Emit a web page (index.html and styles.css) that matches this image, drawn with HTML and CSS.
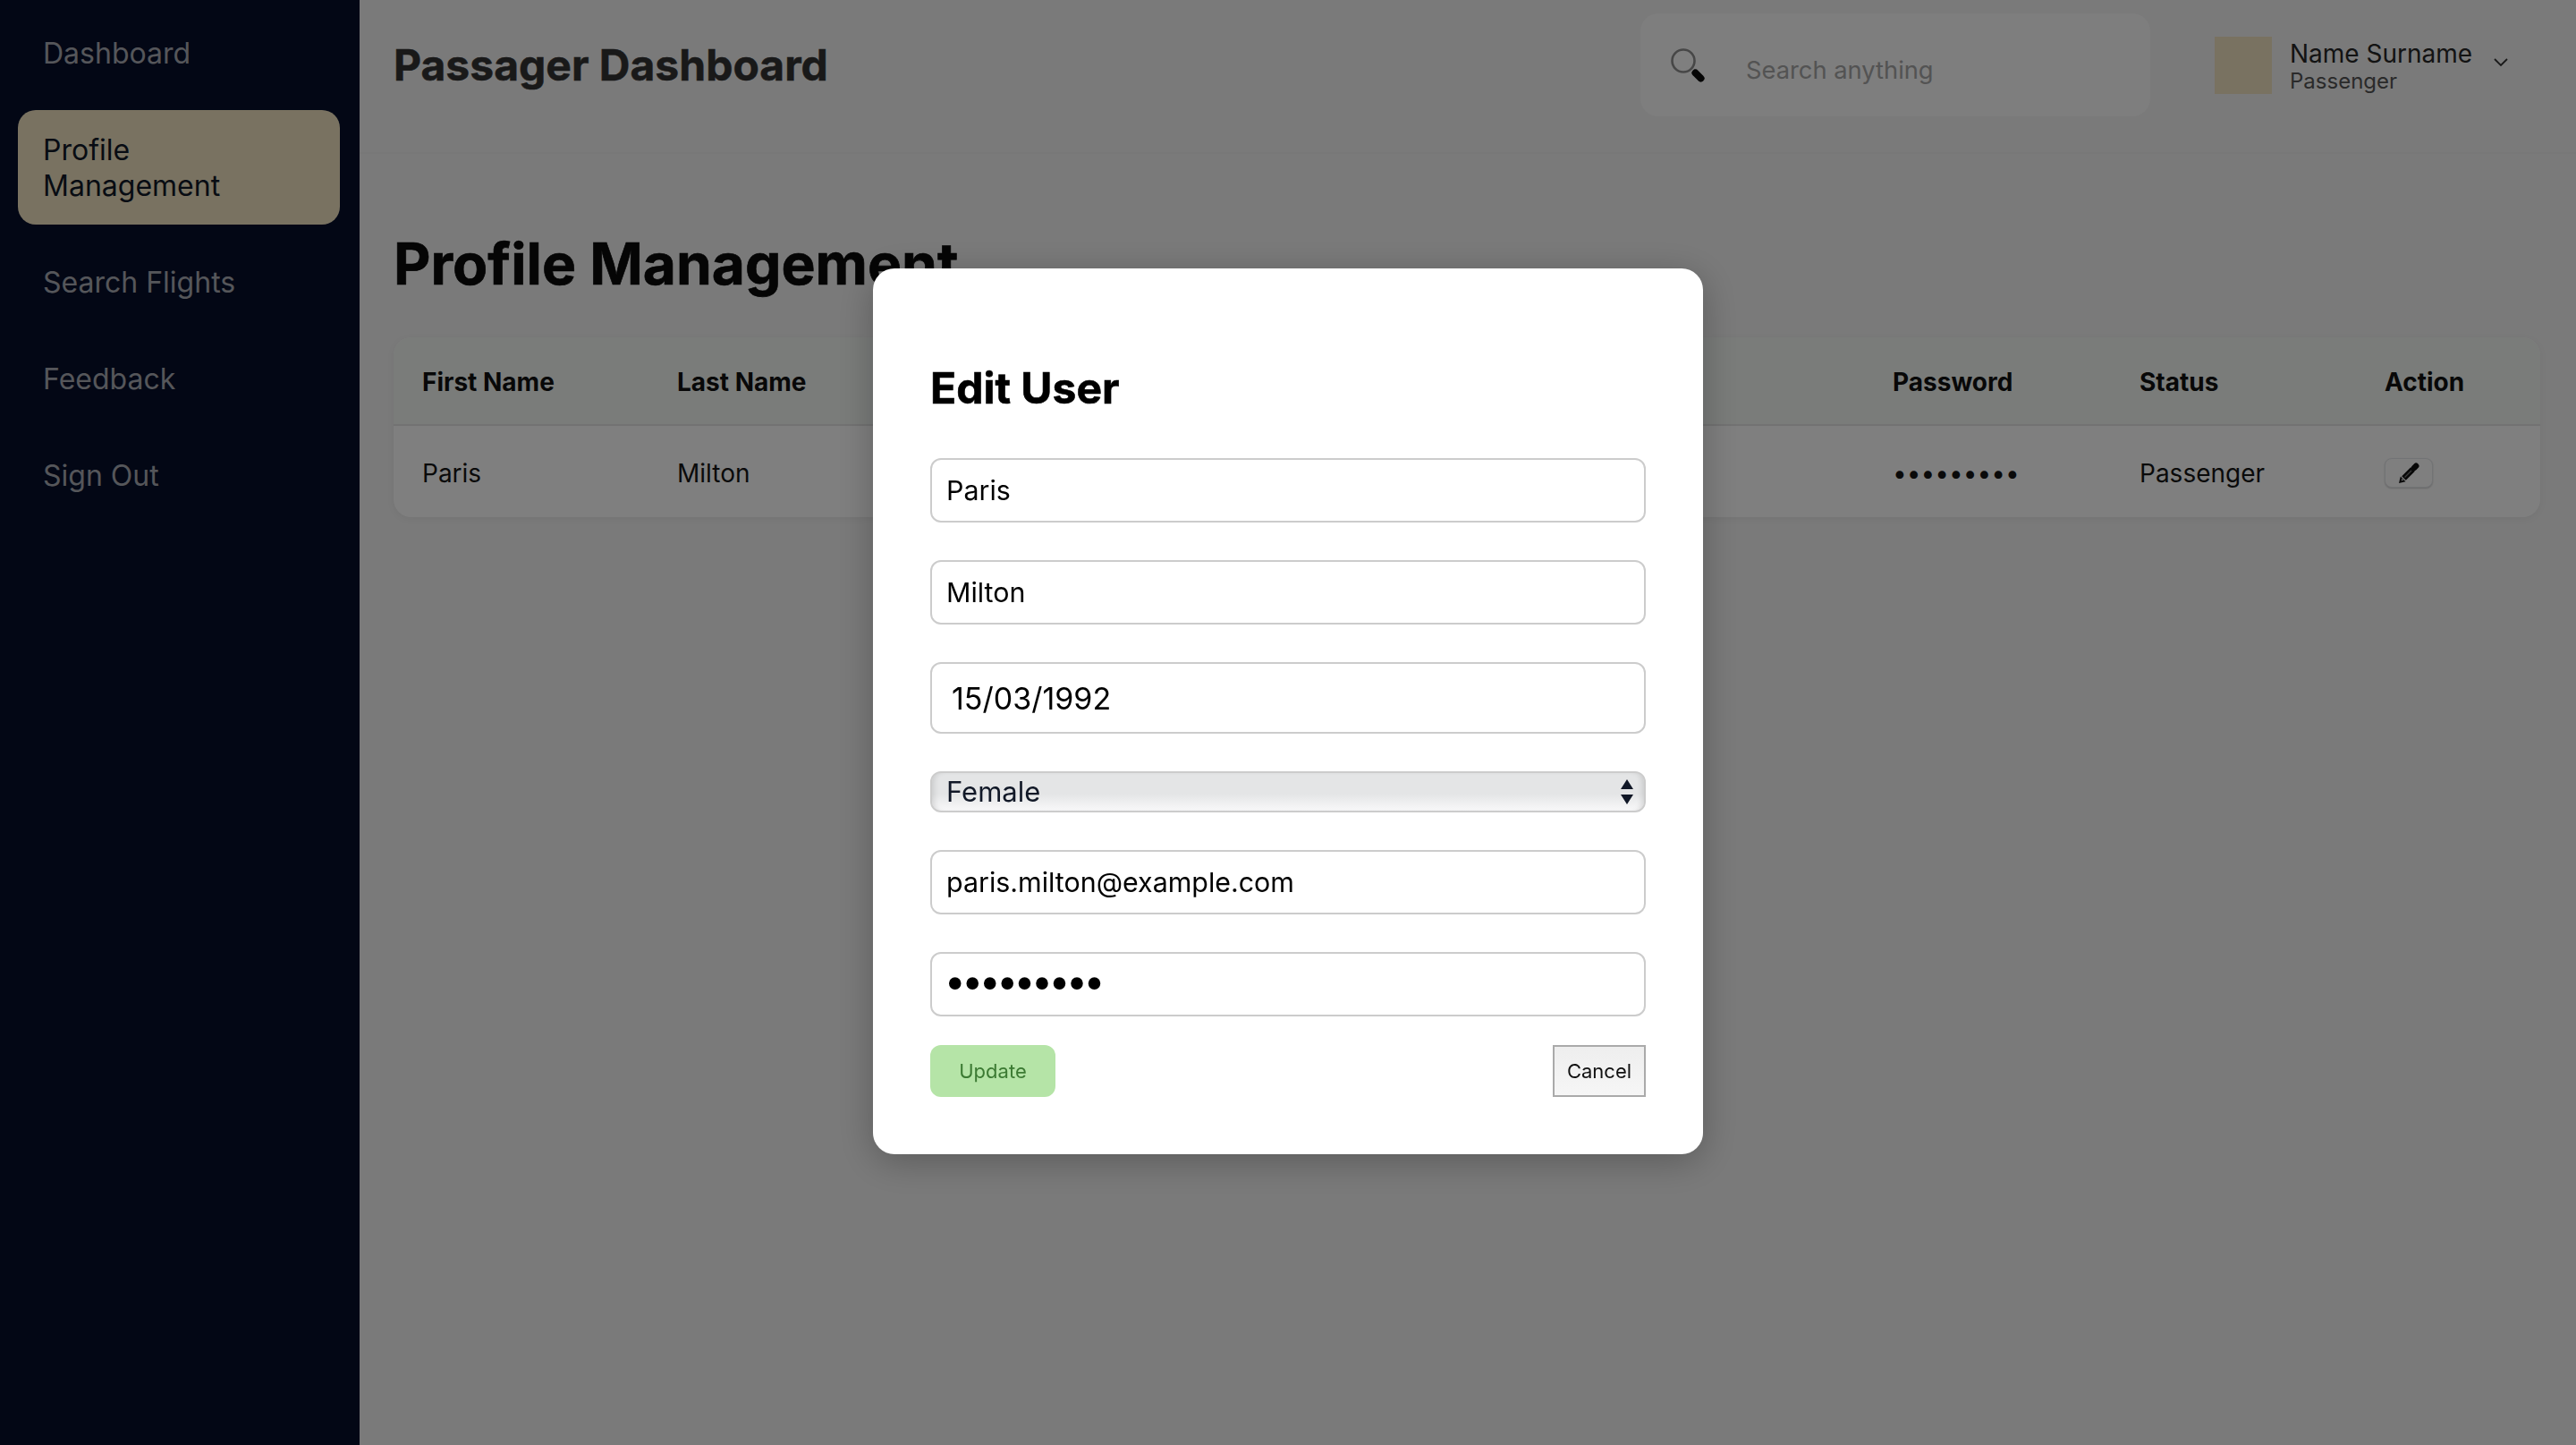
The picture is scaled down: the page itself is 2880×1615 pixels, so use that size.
FILE: index.html
```html
<!DOCTYPE html>
<html lang="en">
<head>
    <meta charset="UTF-8">
    <meta name="viewport" content="width=device-width, initial-scale=1.0">
    <title>Passager Dashboard</title>
    <link rel="stylesheet" href="styles.css">
</head>
<body>
    <div class="layout">
        <nav class="sidebar">
            <a class="nav-link">Dashboard</a>
            <a class="nav-link active">Profile Management</a>
            <a class="nav-link">Search Flights</a>
            <a class="nav-link">Feedback</a>
            <a class="nav-link">Sign Out</a>
        </nav>
        <div class="main">
            <header class="topbar">
                <h1 class="page-title">Passager Dashboard</h1>
                <div class="search-box">
                    <svg class="search-icon" viewBox="0 0 40 40" width="40" height="40">
                        <circle cx="16" cy="15" r="12.5" fill="#fff" stroke="#8e8e8e" stroke-width="2.6"/>
                        <path d="M27 26l2 2" stroke="#333" stroke-width="4"/>
                        <path d="M29.5 28.5l6 6" stroke="#0c0c0c" stroke-width="8" stroke-linecap="round"/>
                    </svg>
                    <span class="search-text">Search anything</span>
                </div>
                <div class="user">
                    <div class="avatar"></div>
                    <div class="user-info">
                        <div class="user-name">Name Surname</div>
                        <div class="user-role">Passenger</div>
                    </div>
                    <svg class="chevron" viewBox="0 0 16 10" width="16" height="10">
                        <path d="M1 1l7 7 7-7" fill="none" stroke="#333" stroke-width="1.8"/>
                    </svg>
                </div>
            </header>
            <section class="content">
                <h2 class="section-title">Profile Management</h2>
                <table class="user-table">
                    <thead>
                        <tr>
                            <th class="col-first">First Name</th>
                            <th class="col-last">Last Name</th>
                            <th class="col-dob">Date of Birth</th>
                            <th class="col-email">Email</th>
                            <th class="col-pass">Password</th>
                            <th class="col-status">Status</th>
                            <th>Action</th>
                        </tr>
                    </thead>
                    <tbody>
                        <tr>
                            <td>Paris</td>
                            <td>Milton</td>
                            <td>15/03/1992</td>
                            <td>paris.milton@example.com</td>
                            <td>•••••••••</td>
                            <td>Passenger</td>
                            <td>
                                <button class="edit-btn" type="button">
                                    <svg viewBox="0 0 24 24" width="24" height="24">
                                        <path d="M18 6l2.2-2.2" stroke="#111" stroke-width="6.5" stroke-linecap="round"/>
                                        <path d="M6.5 17.5L16.5 7.5" stroke="#111" stroke-width="6.5"/>
                                        <path d="M7.5 16.5l7.5-7.5" stroke="#777" stroke-width="1.2"/>
                                        <path d="M1 23l1.8-7.5 5.7 5.7z" fill="#111"/>
                                        <path d="M3.6 20.4l.7-2.8 2.1 2.1z" fill="#bbb"/>
                                    </svg>
                                </button>
                            </td>
                        </tr>
                    </tbody>
                </table>
            </section>
        </div>
    </div>

    <div class="overlay">
        <form class="modal">
            <h2 class="modal-title">Edit User</h2>
            <input class="field" type="text" value="Paris">
            <input class="field" type="text" value="Milton">
            <input class="field field-date" type="text" value="15/03/1992">
            <div class="select-wrap">
                <select class="field-select">
                    <option>Female</option>
                    <option>Male</option>
                </select>
                <svg class="select-arrows" viewBox="0 0 14 28" width="14" height="28">
                    <path d="M7 0l7 11H0z M0 17h14L7 28z" fill="#111827"/>
                </svg>
            </div>
            <input class="field" type="text" value="paris.milton@example.com">
            <input class="field field-pass" type="password" value="paris1992">
            <div class="modal-actions">
                <button class="btn-update" type="button">Update</button>
                <button class="btn-cancel" type="button">Cancel</button>
            </div>
        </form>
    </div>
</body>
</html>
```
FILE: styles.css
```css
* {
    box-sizing: border-box;
}
html, body {
    height: 100%;
}
body {
    margin: 0;
    font-family: Inter, "Liberation Sans", sans-serif;
    background-color: #f4f4f4;
    color: #111;
}
.layout {
    display: flex;
    height: 100%;
}

/* sidebar */
.sidebar {
    width: 402px;
    flex-shrink: 0;
    background-color: #060f2b;
    padding: 15px 22px 15px 20px;
    display: flex;
    flex-direction: column;
    gap: 20px;
}
.nav-link {
    display: block;
    padding: 25px 36px 23px 28px;
    font-size: 32px;
    line-height: 40px;
    color: #aaacb4;
}
.nav-link.active {
    background-color: #f3e5c3;
    border-radius: 20px;
    color: #111827;
}

/* top bar */
.main {
    flex: 1;
    min-width: 0;
}
.topbar {
    height: 172px;
    display: flex;
    align-items: flex-start;
    padding: 15px 40px 0 38px;
    border-bottom: 2px solid #f1f1f1;
}
.page-title {
    margin: 30px 0 0;
    font-size: 48px;
    line-height: 56px;
    font-weight: 700;
    color: #333;
    flex: 1;
    -webkit-text-stroke: 0.5px #333;
}
.search-box {
    width: 570px;
    height: 115px;
    display: flex;
    align-items: center;
    padding: 0 32px;
    background-color: #fcfcfc;
    border-radius: 20px;
}
.search-text {
    margin-left: 46px;
    margin-top: 12px;
    font-size: 27.3px;
    color: #a6a6a6;
}
.user {
    margin-left: 72px;
    margin-top: 26px;
    width: 364px;
    display: flex;
    align-items: flex-start;
}
.avatar {
    width: 64px;
    height: 64px;
    background-color: #f3e5c3;
}
.user-info {
    margin-left: 20px;
    padding-top: 2px;
}
.user-name {
    font-size: 28px;
    line-height: 34px;
    color: #262626;
}
.user-role {
    font-size: 24px;
    line-height: 28px;
    color: #555;
}
.chevron {
    margin: 24px 0 0 24px;
}

/* table */
.content {
    padding: 0 40px 0 38px;
}
.section-title {
    margin: 87px 0 0;
    height: 118px;
    font-size: 64px;
    line-height: 72px;
    font-weight: 700;
    color: #0a0a0a;
    -webkit-text-stroke: 0.7px #0a0a0a;
}
.user-table {
    width: 100%;
    border-collapse: separate;
    border-spacing: 0;
    border-radius: 20px;
    background-color: #fff;
    box-shadow: 0 2px 8px rgba(0,0,0,0.05);
    table-layout: fixed;
    overflow: hidden;
}
.user-table th {
    height: 99px;
    padding: 3px 0 0 32px;
    text-align: left;
    font-size: 28px;
    font-weight: 700;
    background-color: #f4f8f5;
    border-bottom: 2px solid #e4e4e4;
}
.user-table td {
    height: 102px;
    padding: 3px 0 0 32px;
    font-size: 28px;
    color: #151515;
}
.col-first { width: 285px; }
.col-last { width: 500px; }
.col-dob { width: 260px; }
.col-email { width: 599px; }
.col-pass { width: 276px; }
.col-status { width: 274px; }
.edit-btn {
    display: flex;
    align-items: center;
    justify-content: center;
    width: 54px;
    height: 33px;
    padding: 0;
    background-color: #fff;
    border: 1px solid #e5e7eb;
    border-radius: 8px;
    box-shadow: 0 1px 2px rgba(0,0,0,0.2);
}

/* modal */
.overlay {
    position: fixed;
    top: 0;
    left: 0;
    right: 0;
    bottom: 0;
    background-color: rgba(0,0,0,0.5);
    display: flex;
    justify-content: center;
    align-items: flex-start;
    padding-top: 300px;
}
.modal {
    width: 928px;
    height: 990px;
    padding: 64px;
    background-color: #fff;
    border-radius: 24px;
    box-shadow: 0 8px 40px rgba(0,0,0,0.25);
    display: flex;
    flex-direction: column;
}
.modal-title {
    margin: 38px 0 46px;
    font-size: 48px;
    line-height: 64px;
    font-weight: 700;
    color: #000;
    -webkit-text-stroke: 0.6px #000;
}
.field {
    display: block;
    width: 100%;
    height: 72px;
    margin-bottom: 42px;
    padding: 0 16px;
    border: 2px solid #ccc;
    border-radius: 12px;
    background-color: #fff;
    font-family: inherit;
    font-size: 30.4px;
    color: #000;
}
.field-date {
    height: 80px;
    padding: 0 22px;
    font-size: 34px;
}
.field-pass {
    margin-bottom: 32px;
    font-family: "DejaVu Sans", sans-serif;
    font-size: 33px;
    -webkit-text-stroke: 4px #000;
}
.select-wrap {
    position: relative;
    margin-bottom: 42px;
}
.field-select {
    display: block;
    width: 100%;
    height: 46px;
    padding: 0 16px;
    appearance: none;
    border: 2px solid #ccc;
    border-radius: 12px;
    background: linear-gradient(#e4e5e6 0, #e4e5e6 55%, #f8f8f9 100%);
    box-shadow: inset 6px 0 6px -4px rgba(0,0,0,0.12), inset -6px 0 6px -4px rgba(0,0,0,0.12);
    font-family: inherit;
    font-size: 31px;
    line-height: 42px;
    color: #111827;
}
.select-arrows {
    position: absolute;
    right: 14px;
    top: 9px;
}
.modal-actions {
    display: flex;
    justify-content: space-between;
}
.btn-update {
    width: 140px;
    height: 58px;
    border: none;
    border-radius: 12px;
    background-color: #b5e4a7;
    font-family: inherit;
    font-size: 22px;
    color: #3c7a33;
}
.btn-cancel {
    width: 104px;
    height: 58px;
    border: 2px solid #aaa;
    background: linear-gradient(#eeeeee, #f6f6f6);
    font-family: inherit;
    font-size: 22px;
    color: #111;
}
```
